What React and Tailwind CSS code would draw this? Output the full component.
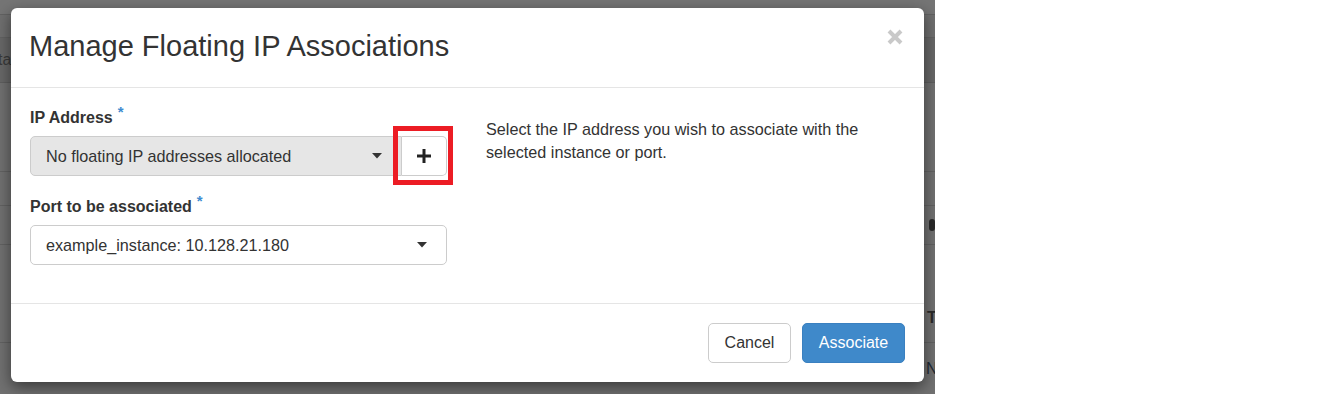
import React from "react";

function Caret() {
  return (
    <svg width="10" height="6" viewBox="0 0 10 6">
      <path d="M0 0h10L5 5.5z" fill="#333" />
    </svg>
  );
}

function PlusIcon() {
  return (
    <svg width="14" height="14" viewBox="0 0 14 14">
      <path d="M7 0v14M0 7h14" stroke="#222" strokeWidth="3" />
    </svg>
  );
}

function CloseIcon() {
  return (
    <svg width="16" height="16" viewBox="0 0 16 16">
      <path d="M2 2l12 12M14 2L2 14" stroke="#c9c9c9" strokeWidth="4" />
    </svg>
  );
}

function Required() {
  return <span className="ml-[5px] relative -top-[6px] text-[15px] text-[#3e8bd0]">*</span>;
}

function App() {
  return (
    <div className="w-full h-[418px] bg-white" style={{ fontFamily: '"Liberation Sans", Arial, sans-serif' }}>
      <div className="relative w-[935px] h-[394px] bg-[#727272] overflow-hidden">
        {/* dimmed page behind the backdrop */}
        <div className="flex flex-col">
          <div className="h-[15px] bg-[#757575] border-b border-[#626262]" />
          <div className="h-[23px] bg-[#6f6f6f] border-b border-[#626262]" />
          <div className="h-[45px] bg-[#686868] border-b border-[#5e5e5e] flex items-center">
            <span className="-ml-[2px] text-[16px] text-[#3a3a3a]">ta</span>
          </div>
          <div className="h-[89px] bg-[#717171] border-b border-[#626262]" />
          <div className="h-[34px] bg-[#717171] border-b border-[#626262]" />
          <div className="h-[39px] bg-[#717171] border-b border-[#626262] flex items-center pl-[929px]">
            <div className="w-[10px] h-[12px] rounded-full bg-[#2a2a2a]" />
          </div>
          <div className="h-[98px] bg-[#717171] border-b border-[#626262] flex items-end pb-[12px] pl-[927px]">
            <span className="text-[16px] font-bold text-[#2a2a2a]">T</span>
          </div>
          <div className="h-[52px] bg-[#717171] flex items-center pl-[926px]">
            <span className="text-[16px] text-[#1f2a36]">N</span>
          </div>
        </div>

        {/* modal */}
        <div className="absolute left-[11px] top-[8px] w-[913px] h-[374px] bg-white rounded-[6px] shadow-[0_5px_15px_rgba(0,0,0,0.5)] flex flex-col text-[#333]">
          <div className="h-[80px] border-b border-[#e5e5e5] flex items-start justify-between pl-[18px] pr-[21px]">
            <h4 className="pt-[22px] text-[29px] leading-[32px] text-[#333]">Manage Floating IP Associations</h4>
            <div className="pt-[21px]">
              <CloseIcon />
            </div>
          </div>

          <div className="h-[215px] flex pl-[19px]">
            <div className="w-[417px] pt-[18px]">
              <label className="block text-[16px] leading-[23px] font-bold mb-[7px]">
                IP Address
                <Required />
              </label>
              <div className="relative flex h-[40px]">
                <div className="flex-1 flex items-center justify-between bg-[#e6e6e6] border border-[#cccccc] rounded-l-[5px] pl-[15px] pr-[19px] text-[16.2px]">
                  <span>No floating IP addresses allocated</span>
                  <Caret />
                </div>
                <div className="w-[45px] flex items-center justify-center bg-white border border-l-0 border-[#cccccc] rounded-r-[5px]">
                  <PlusIcon />
                </div>
                <div className="absolute left-[363px] -top-[10px] w-[60px] h-[59px] border-[5px] border-[#ec1c24]" />
              </div>

              <label className="block text-[16px] leading-[23px] font-bold mt-[19px] mb-[7px]">
                Port to be associated
                <Required />
              </label>
              <div className="h-[40px] flex items-center justify-between bg-white border border-[#cccccc] rounded-[5px] pl-[15px] pr-[19px] text-[16.2px]">
                <span>example_instance: 10.128.21.180</span>
                <Caret />
              </div>
            </div>

            <div className="ml-[39px] pt-[30px] w-[395px] text-[16.2px] leading-[23px]">
              Select the IP address you wish to associate with the selected instance or port.
            </div>
          </div>

          <div className="h-[79px] border-t border-[#e5e5e5] flex items-center justify-end gap-[11px] pr-[19px]">
            <button className="w-[83px] h-[40px] rounded-[5px] border border-[#cccccc] bg-white text-[16px] text-[#333]">
              Cancel
            </button>
            <button className="w-[103px] h-[40px] rounded-[5px] border border-[#3a80c0] bg-[#3f89ca] text-[16px] text-white">
              Associate
            </button>
          </div>
        </div>
      </div>
    </div>
  );
}

export default App;
